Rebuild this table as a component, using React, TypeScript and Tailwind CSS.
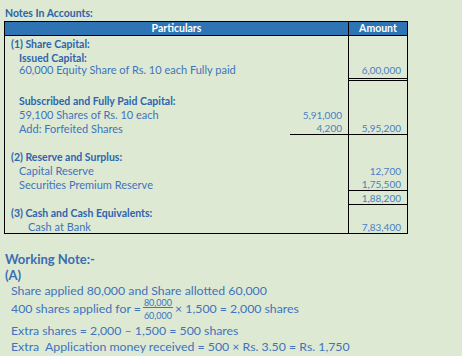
import React from 'react';

type Row = {
  label?: string;
  bold?: boolean;
  indent?: 0 | 1 | 2;
  sub?: string;
  amount?: string;
  subLine?: boolean;
  amountLine?: 'single' | 'double';
  height?: string;
};

const ROWS: Row[] = [
  { label: '(1) Share Capital:', bold: true, indent: 0 },
  { label: 'Issued Capital:', bold: true, indent: 1 },
  {
    label: '60,000 Equity Share of Rs. 10 each Fully paid',
    indent: 1,
    amount: '6,00,000',
    amountLine: 'double',
    height: 'h-[17px]',
  },
  { height: 'h-[12px]' },
  { label: 'Subscribed and Fully Paid Capital:', bold: true, indent: 1 },
  { label: '59,100 Shares of Rs. 10 each', indent: 1, sub: '5,91,000' },
  { label: 'Add: Forfeited Shares', indent: 1, sub: '4,200', amount: '5,95,200', subLine: true, amountLine: 'single' },
  {},
  { label: '(2) Reserve and Surplus:', bold: true, indent: 0 },
  { label: 'Capital Reserve', indent: 1, amount: '12,700' },
  { label: 'Securities Premium Reserve', indent: 1, amount: '1,75,500', amountLine: 'single' },
  { amount: '1,88,200', amountLine: 'single' },
  { label: '(3) Cash and Cash Equivalents:', bold: true, indent: 0 },
  { label: 'Cash at Bank', indent: 2, amount: '7,83,400' },
];

const indentClass = ['pl-[6px]', 'pl-[14px]', 'pl-[23px]'];

function TableRow({ row }: { row: Row }) {
  const double = row.amountLine === 'double';
  return (
    <div className={`flex items-end ${row.height ?? 'h-[14px]'}`}>
      <div
        className={`w-[285px] whitespace-nowrap pb-[1px] ${indentClass[row.indent ?? 0]} ${
          row.bold ? 'text-[10.5px] font-bold text-[#2f64ad]' : 'text-[11px] text-[#3f73bd]'
        } ${double ? 'mb-[5px]' : ''}`}
      >
        {row.label}
      </div>
      <div
        className={`flex h-full w-[58px] items-end justify-end pb-[1px] pr-[6px] text-[10px] text-[#4a80c4] ${
          row.subLine ? 'border-b border-black' : ''
        }`}
      >
        {row.sub}
      </div>
      <div
        className={`flex h-full w-[59px] items-end justify-end border-l border-black pr-[6px] text-[10px] text-[#4a80c4] ${
          row.amountLine === 'single'
            ? 'border-b pb-[1px]'
            : double
            ? 'border-b-[3px] border-double pb-[3px]'
            : 'pb-[1px]'
        }`}
      >
        {row.amount}
      </div>
    </div>
  );
}

export default function App() {
  return (
    <div
      className="h-[356px] w-[462px] overflow-hidden bg-[#dde9d2] pt-[7px] text-[11px] leading-none"
      style={{ fontFamily: 'Lato, "Open Sans", sans-serif' }}
    >
      <div className="h-[14px] pl-[5px] text-[10.5px] font-bold leading-[12px] text-[#2f62a8]">
        Notes In Accounts:
      </div>

      {/* Notes table */}
      <div className="ml-[4px] w-[404px] border border-black">
        <div className="flex h-[13px] items-center bg-[#2e74b5] text-[10.5px] font-bold text-white">
          <div className="w-[343px] text-center">Particulars</div>
          <div className="flex h-full w-[59px] items-center justify-center border-l border-black">Amount</div>
        </div>
        <div className="border-t border-black">
          {ROWS.map((row, i) => (
            <TableRow key={i} row={row} />
          ))}
        </div>
      </div>

      {/* Working note */}
      <div className="mt-[17px] flex h-[16px] items-center pl-[5px] text-[13px] font-bold text-[#3a6db3]">
        Working Note:-
      </div>
      <div className="flex h-[17px] items-center pl-[5px] text-[13px] font-bold text-[#3a6db3]">(A)</div>
      <div className="pl-[11px] text-[12.3px] text-[#3f73bd]">
        <div className="flex h-[15px] items-center">Share applied 80,000 and Share allotted 60,000</div>
        <div className="mt-[1px] flex h-[18px] items-center whitespace-nowrap">
          <span>400 shares applied for =</span>
          <span className="mx-[2px] inline-flex flex-col items-center text-[9px] leading-[9px]">
            <span className="border-b border-[#3f73bd] px-[1px]">80,000</span>
            <span className="px-[1px] pt-[3px]">60,000</span>
          </span>
          <span>× 1,500 = 2,000 shares</span>
        </div>
        <div className="mt-[5px] flex h-[16px] items-center">Extra shares = 2,000 – 1,500 = 500 shares</div>
        <div className="flex h-[16px] items-center whitespace-nowrap">
          Extra&nbsp; Application money received = 500 × Rs. 3.50 = Rs. 1,750
        </div>
      </div>
    </div>
  );
}
